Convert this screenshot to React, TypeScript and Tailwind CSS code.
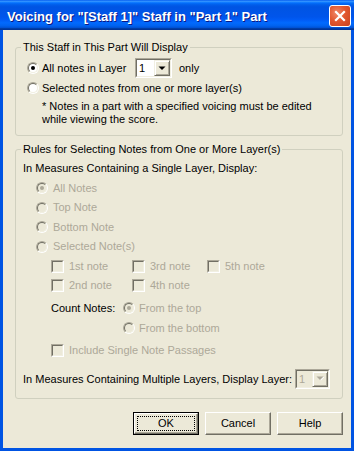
import type { ReactNode } from "react";

const DIS = "text-[#ACA899]";

function Radio({ checked, disabled }: { checked?: boolean; disabled?: boolean }) {
  return (
    <span className="flex h-[12px] w-[12px] shrink-0 rounded-full border border-[#ACA899] border-r-white border-b-white">
      <span
        className={`flex flex-1 items-center justify-center rounded-full border border-[#716F64] border-r-[#F1EFE2] border-b-[#F1EFE2] ${
          disabled ? "bg-[#ECE9D8]" : "bg-white"
        }`}
      >
        {checked && (
          <span className={`h-[4px] w-[4px] rounded-full ${disabled ? "bg-[#ACA899]" : "bg-black"}`} />
        )}
      </span>
    </span>
  );
}

function Check() {
  return (
    <span className="flex h-[13px] w-[13px] shrink-0 border border-[#ACA899] border-r-white border-b-white">
      <span className="flex-1 border border-[#716F64] border-r-[#F1EFE2] border-b-[#F1EFE2] bg-[#ECE9D8]" />
    </span>
  );
}

function Combo({ disabled, width }: { disabled?: boolean; width: string }) {
  return (
    <span className={`flex h-[20px] shrink-0 border border-[#ACA899] border-r-white border-b-white ${width}`}>
      <span
        className={`flex flex-1 border border-[#716F64] border-r-[#F1EFE2] border-b-[#F1EFE2] ${
          disabled ? "bg-[#ECE9D8]" : "bg-white"
        }`}
      >
        <span className={`flex-1 pl-[2px] leading-[16px] ${disabled ? DIS : "text-black"}`}>1</span>
        <span className="flex w-[16px] items-center justify-center border border-[#F1EFE2] border-r-[#716F64] border-b-[#716F64] bg-[#ECE9D8] shadow-[inset_1px_1px_#ffffff,inset_-1px_-1px_#ACA899]">
          <svg width="8" height="5" viewBox="0 0 8 5">
            {disabled && <path d="M1.5 1h7L5 4.5z" fill="#ffffff" />}
            <path d="M0.5 0.5h7L4 4z" fill={disabled ? "#ACA899" : "#000000"} />
          </svg>
        </span>
      </span>
    </span>
  );
}

function Btn({ children, def }: { children: ReactNode; def?: boolean }) {
  return (
    <button className={`flex h-[23px] w-[66px] ${def ? "border border-black" : ""}`}>
      <span className="flex flex-1 border border-white border-r-[#716F64] border-b-[#716F64] bg-[#ECE9D8] p-[2px] shadow-[inset_-1px_-1px_#ACA899]">
        <span
          className={`flex flex-1 items-center justify-center ${
            def ? "border border-dotted border-black" : "border border-transparent"
          }`}
        >
          {children}
        </span>
      </span>
    </button>
  );
}

function Row({ h, className = "", children }: { h: string; className?: string; children: ReactNode }) {
  return <div className={`flex items-center ${h} ${className}`}>{children}</div>;
}

export default function App() {
  return (
    <div className="flex h-[451px] w-[354px] flex-col bg-[#0054E3] font-['Liberation_Sans',Arial,sans-serif] text-[11px] leading-[13px] text-black">
      {/* title bar */}
      <div className="flex h-[30px] shrink-0 bg-[linear-gradient(to_bottom,#0058EE_0%,#3593FF_4%,#288EFF_6%,#127DFF_8%,#036FFC_10%,#0262EE_14%,#0057E5_20%,#0054E3_24%,#0055EB_56%,#005BF5_66%,#026AFE_76%,#0062EF_86%,#0052D6_92%,#0040AB_94%,#003092_100%)] pl-[7px] pr-[3px]">
        <span className="pt-[9px] text-[13px] leading-[15px] font-bold text-white [text-shadow:1px_1px_#0A1883]">
          Voicing for "[Staff 1]" Staff in "Part 1" Part
        </span>
        <span className="mt-[5px] ml-auto flex h-[22px] w-[22px] items-center justify-center rounded-[3px] border border-white bg-[radial-gradient(circle_at_35%_35%,#F0896B_0%,#E2572F_45%,#C8401B_100%)]">
          <svg width="20" height="20" viewBox="0 0 20 20">
            <path d="M6 6L14 14M14 6L6 14" stroke="#ffffff" strokeWidth="2.2" strokeLinecap="square" />
          </svg>
        </span>
      </div>

      {/* client area */}
      <div className="mx-[3px] mb-[3px] flex flex-1 flex-col bg-[#ECE9D8] pt-[11px] pl-[12px]">
        <fieldset className="w-[328px] rounded-[3px] border border-[#D0D0BF] pb-[9px] pl-[5px]">
          <legend className="px-[2px] leading-[13px]">This Staff in This Part Will Display</legend>
          <Row h="h-[20px]" className="mt-[4px]">
            <span className="ml-[6px]">
              <Radio checked />
            </span>
            <span className="ml-[3px] w-[93px]">All notes in Layer</span>
            <Combo width="w-[37px]" />
            <span className="ml-[7px]">only</span>
          </Row>
          <Row h="h-[20px]">
            <span className="ml-[6px]">
              <Radio />
            </span>
            <span className="ml-[3px]">Selected notes from one or more layer(s)</span>
          </Row>
          <p className="mt-[2px] ml-[21px]">
            * Notes in a part with a specified voicing must be edited
            <br />
            while viewing the score.
          </p>
        </fieldset>

        <fieldset className="mt-[7px] w-[328px] rounded-[3px] border border-[#D0D0BF] pb-[9px] pl-[5px]">
          <legend className="px-[2px] leading-[13px]">Rules for Selecting Notes from One or More Layer(s)</legend>
          <Row h="h-[20px]" className="mt-[2px] pl-[2px]">
            In Measures Containing a Single Layer, Display:
          </Row>
          {[
            ["All Notes", true, "h-[20px]"],
            ["Top Note", false, "h-[19px]"],
            ["Bottom Note", false, "h-[20px]"],
            ["Selected Note(s)", false, "h-[19px]"],
          ].map(([label, on, h]) => (
            <Row key={label as string} h={h as string}>
              <span className="ml-[15px]">
                <Radio checked={on as boolean} disabled />
              </span>
              <span className={`ml-[5px] ${DIS}`}>{label as string}</span>
            </Row>
          ))}
          {[
            [["1st note", "w-[81px]"], ["3rd note", "w-[75px]"], ["5th note", ""]],
            [["2nd note", "w-[81px]"], ["4th note", "w-[75px]"]],
          ].map((line, i) => (
            <Row key={i} h={i === 0 ? "h-[20px]" : "h-[19px]"} className="pl-[30px]">
              {line.map(([label, w]) => (
                <span key={label} className={`flex items-center ${w}`}>
                  <Check />
                  <span className={`ml-[5px] ${DIS}`}>{label}</span>
                </span>
              ))}
            </Row>
          ))}
          <Row h="h-[20px]" className="mt-[3px] pl-[30px]">
            <span className="w-[72px]">Count Notes:</span>
            <Radio checked disabled />
            <span className={`ml-[4px] ${DIS}`}>From the top</span>
          </Row>
          <Row h="h-[20px]" className="pl-[102px]">
            <Radio disabled />
            <span className={`ml-[4px] ${DIS}`}>From the bottom</span>
          </Row>
          <Row h="h-[20px]" className="mt-[2px] pl-[30px]">
            <Check />
            <span className={`ml-[5px] ${DIS}`}>Include Single Note Passages</span>
          </Row>
          <Row h="h-[21px]" className="mt-[8px] pl-[2px]">
            <span className="w-[272px] pt-[2px]">In Measures Containing Multiple Layers, Display Layer:</span>
            <Combo disabled width="w-[35px]" />
          </Row>
        </fieldset>

        <div className="mt-[13px] flex w-[328px] justify-end gap-[6px]">
          <Btn def>OK</Btn>
          <Btn>Cancel</Btn>
          <Btn>Help</Btn>
        </div>
      </div>
    </div>
  );
}
